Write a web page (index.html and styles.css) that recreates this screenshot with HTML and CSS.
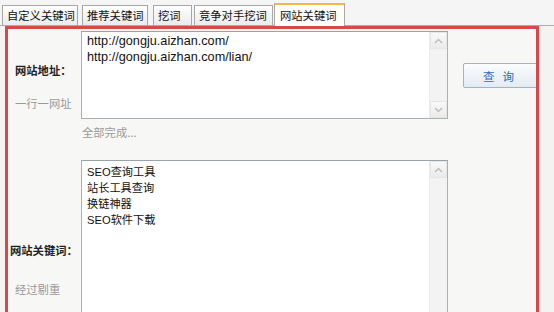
FILE: index.html
```html
<!DOCTYPE html>
<html lang="zh-CN">
<head>
<meta charset="utf-8">
<title>网站关键词</title>
<link rel="stylesheet" href="styles.css">
</head>
<body>
<div class="tabs">
  <div class="tab t1">自定义关键词</div>
  <div class="tab t2">推荐关键词</div>
  <div class="tab t3">挖词</div>
  <div class="tab t4">竞争对手挖词</div>
  <div class="tab t5 active">网站关键词</div>
</div>
<div class="panel">
  <div class="labels row1-labels">
    <div class="label">网站地址：</div>
    <div class="hint">一行一网址</div>
  </div>
  <div class="textbox box1">
    <div class="text">http://gongju.aizhan.com/<br>http://gongju.aizhan.com/lian/</div>
    <div class="scrollbar">
      <div class="arrow up"><svg width="9" height="6" viewBox="0 0 9 6"><path d="M1 5 L4.5 1.5 L8 5" fill="none" stroke="#b9bcc0" stroke-width="1.4"/></svg></div>
      <div class="track"></div>
      <div class="arrow down"><svg width="9" height="6" viewBox="0 0 9 6"><path d="M1 1 L4.5 4.5 L8 1" fill="none" stroke="#b9bcc0" stroke-width="1.4"/></svg></div>
    </div>
  </div>
  <div class="btn-cell"><button class="btn"><span>查</span><span>询</span></button></div>

  <div></div>
  <div class="status">全部完成...</div>
  <div></div>

  <div class="labels row3-labels">
    <div class="label">网站关键词：</div>
    <div class="hint">经过剔重</div>
  </div>
  <div class="textbox box2">
    <div class="text">SEO查询工具<br>站长工具查询<br>换链神器<br>SEO软件下载</div>
    <div class="scrollbar">
      <div class="arrow up"><svg width="9" height="6" viewBox="0 0 9 6"><path d="M1 5 L4.5 1.5 L8 5" fill="none" stroke="#b9bcc0" stroke-width="1.4"/></svg></div>
      <div class="track"></div>
    </div>
  </div>
  <div></div>
</div>
</body>
</html>
```
FILE: styles.css
```css
html, body {
  margin: 0;
  padding: 0;
  height: 312px;
  overflow: hidden;
}
body {
  background: #f4f3f1;
  font-family: "Liberation Sans", Arial, "Noto Sans CJK SC", sans-serif;
  font-size: 12px;
  color: #000;
}
.tabs {
  height: 25px;
  border-bottom: 1px solid #ababab;
  background: #f5f5f5;
  display: flex;
  align-items: flex-end;
  padding-left: 2px;
}
.tab {
  box-sizing: border-box;
  height: 20px;
  border: 1px solid #a7a7a7;
  border-bottom: none;
  background: linear-gradient(#ffffff, #ebebeb);
  font-family: "Noto Sans CJK SC", sans-serif;
  font-size: 11.3px;
  line-height: 18px;
  padding-left: 4px;
  white-space: nowrap;
  overflow: hidden;
  color: #111;
}
.t1 { width: 76px; margin-right: 4px; }
.t2 { width: 66px; margin-right: 5px; }
.t3 { width: 39px; margin-right: 2px; }
.t4 { width: 79px; margin-right: 1px; }
.t5 { width: 71px; }
.tab.active {
  height: 23px;
  border-top: 2px solid #f2b84b;
  background: #fdfdfc;
  line-height: 20px;
  margin-bottom: -1px;
  padding-left: 5px;
}
.panel {
  margin-left: 5px;
  width: 534px;
  box-sizing: border-box;
  height: 300px;
  border: 3px solid #d8474a;
  border-bottom: none;
  background: #f7f7f5;
  display: grid;
  grid-template-columns: 73px 367px 1fr;
  grid-template-rows: 88px auto auto;
  padding-top: 2px;
  overflow: hidden;
}
.labels {
  display: flex;
  flex-direction: column;
}
.label {
  font-family: "Noto Sans CJK SC", sans-serif;
  font-weight: bold;
  font-size: 11.3px;
  line-height: 16px;
  white-space: nowrap;
  color: #222;
}
.hint {
  font-family: "Noto Sans CJK SC", sans-serif;
  font-size: 11.3px;
  line-height: 16px;
  color: #9a9a9a;
  padding-left: 7px;
  white-space: nowrap;
}
.row1-labels .label { margin-top: 31px; padding-left: 7px; }
.row1-labels .hint { margin-top: 17px; }
.row3-labels .label { margin-top: 102px; padding-left: 2px; }
.row3-labels .hint { margin-top: 23px; }
.textbox {
  box-sizing: border-box;
  border: 1px solid #a9b0b8;
  border-top-color: #9aa2ab;
  background: #fff;
  display: flex;
}
.box1 { height: 88px; }
.box2 { height: 200px; margin-top: 20px; }
.text {
  flex: 1;
  padding: 1px 5px;
  line-height: 16px;
  font-family: "Liberation Sans", Arial, "Noto Sans CJK SC", sans-serif;
  font-size: 12.7px;
  color: #111;
}
.box2 .text {
  padding-top: 3px;
  font-size: 11.2px;
}
.scrollbar {
  width: 17px;
  display: flex;
  flex-direction: column;
  background: #f3f3f3;
  border-left: 1px solid #ececec;
}
.arrow {
  height: 17px;
  box-sizing: border-box;
  border: 1px solid #e6e6e6;
  background: linear-gradient(#f9f9f9, #ebebeb);
  display: flex;
  align-items: center;
  justify-content: center;
}
.track { flex: 1; }
.btn-cell {
  padding-left: 15px;
}
.btn {
  margin-top: 32px;
  width: 76px;
  height: 25px;
  border: 1px solid #a6b2be;
  border-radius: 2px;
  background: linear-gradient(#fbfcfd, #e3ebf2);
  color: #2b6bbd;
  font-family: "Noto Sans CJK SC", sans-serif;
  font-size: 11.5px;
  padding: 0 0 0 19px;
  display: flex;
  align-items: center;
  gap: 8px;
}
.status {
  margin-top: 5px;
  font-family: "Noto Sans CJK SC", sans-serif;
  font-size: 11.3px;
  line-height: 16px;
  color: #9a9a9a;
  padding-left: 1px;
}
```
